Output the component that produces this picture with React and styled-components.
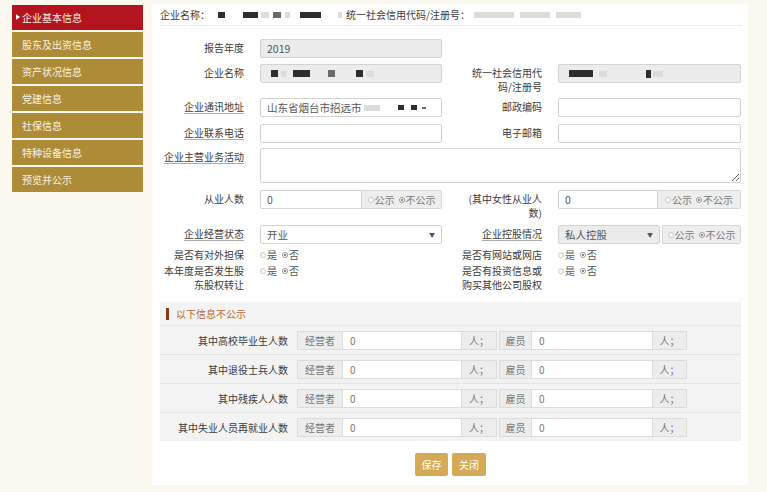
import React from "react";
import styled, { createGlobalStyle } from "styled-components";

const GlobalStyle = createGlobalStyle`
  html, body { margin: 0; padding: 0; background: #fbf8ef; }
  body {
    font-family: "Noto Sans CJK SC", "Noto Sans", sans-serif;
    font-size: 10px;
    color: #3a3a3a;
  }
`;

const Page = styled.div`
  display: flex;
  align-items: flex-start;
  gap: 9px;
  width: 767px;
  height: 492px;
  padding: 4px 0 0 12px;
  box-sizing: border-box;
`;

const Sidebar = styled.ul`
  list-style: none;
  margin: 1px 0 0;
  padding: 0;
  width: 131px;
  display: flex;
  flex-direction: column;
  gap: 2px;
`;

const NavItem = styled.li`
  position: relative;
  height: 25px;
  line-height: 25px;
  padding-left: 10px;
  color: #fbf3e4;
  font-size: 10px;
  background: ${p => (p.$active ? "#b3141d" : "#ae8b37")};
  &::before {
    content: "";
    display: ${p => (p.$active ? "block" : "none")};
    position: absolute;
    left: 4px;
    top: 9px;
    border-left: 4px solid #fff;
    border-top: 3px solid transparent;
    border-bottom: 3px solid transparent;
  }
`;

const Panel = styled.div`
  width: 596px;
  height: 481px;
  background: #fff;
  padding: 0 7px 0 8px;
  box-sizing: border-box;
  display: flex;
  flex-direction: column;
`;

const Header = styled.div`
  display: flex;
  align-items: center;
  height: 12px;
  padding: 5px 0 4px;
  margin-right: -1px;
  border-bottom: 1px solid #ececec;
  line-height: 12px;
`;

const Blot = styled.span`
  display: inline-block;
  flex: none;
  width: ${p => p.$w}px;
  height: ${p => p.$h || 6}px;
  margin-left: ${p => p.$ml || 0}px;
  background: ${p => (p.$tone === "dark" ? "#2e2e2e" : p.$tone === "mid" ? "#6a6a6a" : "#dcdcdc")};
  filter: blur(0.6px);
`;

const Row = styled.div`
  display: grid;
  grid-template-columns: 84px 182px 84px 183px;
  column-gap: 16px;
  align-items: start;
  margin-top: ${p => p.$mt}px;
`;

const Label = styled.div`
  text-align: right;
  line-height: 14px;
  padding-top: 2px;
  white-space: nowrap;
  span {
    text-decoration: ${p => (p.$tip ? "underline" : "none")};
    text-decoration-color: #aaa;
    text-underline-offset: 2px;
  }
`;

const Field = styled.div`
  display: flex;
  align-items: center;
  height: 19px;
  flex: 1;
  min-width: 0;
  padding: 0 6px;
  box-sizing: border-box;
  border: 1px solid #d2d2d2;
  border-radius: ${p => (p.$joined ? "2px 0 0 2px" : "2px")};
  background: ${p => (p.$ro ? "#ececec" : "#fff")};
  color: #555;
  font-size: 10.5px;
  overflow: hidden;
  white-space: nowrap;
`;

const Arrow = styled.span`
  margin-left: auto;
  font-size: 6px;
  color: #555;
`;

const Area = styled.textarea`
  grid-column: 2 / 5;
  height: 35px;
  margin: 0;
  border: 1px solid #d2d2d2;
  border-radius: 2px;
  box-sizing: border-box;
  font-family: inherit;
  resize: vertical;
`;

const Group = styled.div`
  display: flex;
  gap: ${p => p.$gap || 0}px;
`;

const Addon = styled.div`
  display: flex;
  align-items: center;
  justify-content: center;
  width: ${p => p.$w}px;
  flex: none;
  height: 19px;
  box-sizing: border-box;
  border: 1px solid #d8d8d8;
  border-left: ${p => (p.$sep ? "1px solid #d8d8d8" : "none")};
  border-radius: 0 2px 2px 0;
  background: #eee;
  color: #777;
  font-size: 10px;
  gap: 4px;
`;

const Radios = styled.div`
  display: flex;
  align-items: center;
  gap: 5px;
  line-height: 14px;
  padding-top: 2px;
  color: #555;
`;

const RadioOpt = styled.span`
  display: inline-flex;
  align-items: center;
  gap: 1px;
  &::before {
    content: "";
    width: 4px;
    height: 4px;
    border-radius: 50%;
    border: 1px solid ${p => (p.$on ? "#999" : "#c8c8c8")};
    background: ${p => (p.$on ? "radial-gradient(circle, #888 45%, #fff 55%)" : "#fff")};
  }
`;

const Section = styled.div`
  margin-top: 10px;
  background: #f3f3f3;
`;

const SectionHead = styled.div`
  display: flex;
  align-items: center;
  height: 23px;
  padding-left: 6px;
  border-bottom: 1px solid #e6e6e6;
  color: #b8672a;
  &::before {
    content: "";
    width: 3px;
    height: 12px;
    margin-right: 7px;
    background: #8b3b13;
  }
`;

const TRow = styled.div`
  display: flex;
  align-items: center;
  height: 28px;
  border-bottom: 1px solid #e4e4e4;
  &:last-child { border-bottom: none; }
`;

const TLabel = styled.div`
  width: 128px;
  margin-right: 9px;
  text-align: right;
`;

const Cell = styled.div`
  display: flex;
  align-items: center;
  height: 19px;
  width: ${p => p.$w}px;
  box-sizing: border-box;
  padding: 0 ${p => (p.$input ? 7 : 0)}px;
  justify-content: ${p => (p.$input ? "flex-start" : "center")};
  border: 1px solid #dcdcdc;
  border-left: ${p => (p.$first ? "1px solid #dcdcdc" : "none")};
  margin-left: ${p => p.$ml || 0}px;
  background: ${p => (p.$input ? "#fff" : "#ededed")};
  color: #777;
`;

const Actions = styled.div`
  display: flex;
  justify-content: center;
  gap: 4px;
  margin-top: 12px;
`;

const Button = styled.button`
  height: 23px;
  width: ${p => p.$w}px;
  padding: 0;
  border: none;
  border-radius: 2px;
  background: #d5aa57;
  color: #fff;
  font-family: inherit;
  font-size: 10px;
`;

const nav = ["企业基本信息", "股东及出资信息", "资产状况信息", "党建信息", "社保信息", "特种设备信息", "预览并公示"];

const Publish = () => (
  <>
    <RadioOpt>公示</RadioOpt>
    <RadioOpt $on>不公示</RadioOpt>
  </>
);

const YesNo = () => (
  <Radios>
    <RadioOpt>是</RadioOpt>
    <RadioOpt $on>否</RadioOpt>
  </Radios>
);

const staff = ["其中高校毕业生人数", "其中退役士兵人数", "其中残疾人人数", "其中失业人员再就业人数"];

export default function App() {
  return (
    <Page>
      <GlobalStyle />
      <Sidebar>
        {nav.map((n, i) => (
          <NavItem key={n} $active={i === 0}>{n}</NavItem>
        ))}
      </Sidebar>
      <Panel>
        <Header>
          企业名称：
          <Blot $ml={8} $w={7} $tone="dark" />
          <Blot $ml={18} $w={15} $tone="dark" />
          <Blot $ml={3} $w={8} />
          <Blot $ml={4} $w={8} $tone="mid" />
          <Blot $ml={4} $w={5} />
          <Blot $ml={10} $w={21} $tone="dark" />
          <Blot $ml={17} $w={4} />
          <span style={{ marginLeft: 4 }}>统一社会信用代码/注册号：</span>
          <Blot $ml={4} $w={40} />
          <Blot $ml={6} $w={30} />
          <Blot $ml={6} $w={25} />
        </Header>

        <Row $mt={13}>
          <Label>报告年度</Label>
          <Field $ro>2019</Field>
        </Row>

        <Row $mt={6}>
          <Label>企业名称</Label>
          <Field $ro>
            <Blot $ml={4} $w={7} $h={7} $tone="dark" />
            <Blot $ml={3} $w={5} />
            <Blot $ml={7} $w={17} $h={7} $tone="dark" />
            <Blot $ml={18} $w={7} $h={7} $tone="mid" />
            <Blot $ml={21} $w={7} $h={7} $tone="dark" />
            <Blot $ml={3} $w={8} />
          </Field>
          <Label>统一社会信用代<br />码/注册号</Label>
          <Field $ro>
            <Blot $ml={4} $w={24} $h={7} $tone="dark" />
            <Blot $ml={6} $w={8} />
            <Blot $ml={39} $w={5} $h={8} $tone="dark" />
            <Blot $ml={2} $w={10} />
          </Field>
        </Row>

        <Row $mt={4}>
          <Label $tip><span>企业通讯地址</span></Label>
          <Field>
            山东省烟台市招远市
            <Blot $ml={2} $w={16} />
            <Blot $ml={18} $w={6} $h={5} $tone="dark" />
            <Blot $ml={7} $w={6} $h={5} $tone="dark" />
            <Blot $ml={5} $w={4} $h={2} $tone="mid" />
          </Field>
          <Label>邮政编码</Label>
          <Field />
        </Row>

        <Row $mt={7}>
          <Label $tip><span>企业联系电话</span></Label>
          <Field />
          <Label>电子邮箱</Label>
          <Field />
        </Row>

        <Row $mt={5}>
          <Label $tip><span>企业主营业务活动</span></Label>
          <Area />
        </Row>

        <Row $mt={7}>
          <Label>从业人数</Label>
          <Group>
            <Field $joined>0</Field>
            <Addon $w={80}><Publish /></Addon>
          </Group>
          <Label>(其中女性从业人<br />数)</Label>
          <Group>
            <Field $joined>0</Field>
            <Addon $w={83}><Publish /></Addon>
          </Group>
        </Row>

        <Row $mt={5}>
          <Label $tip><span>企业经营状态</span></Label>
          <Field>
            开业<Arrow>▼</Arrow>
          </Field>
          <Label $tip><span>企业控股情况</span></Label>
          <Group $gap={2}>
            <Field $ro>
              私人控股<Arrow>▼</Arrow>
            </Field>
            <Addon $w={79} $sep><Publish /></Addon>
          </Group>
        </Row>

        <Row $mt={2}>
          <Label>是否有对外担保</Label>
          <YesNo />
          <Label>是否有网站或网店</Label>
          <YesNo />
        </Row>

        <Row $mt={0}>
          <Label>本年度是否发生股<br />东股权转让</Label>
          <YesNo />
          <Label>是否有投资信息或<br />购买其他公司股权</Label>
          <YesNo />
        </Row>

        <Section>
          <SectionHead>以下信息不公示</SectionHead>
          {staff.map(s => (
            <TRow key={s}>
              <TLabel>{s}</TLabel>
              <Cell $first $w={46}>经营者</Cell>
              <Cell $input $w={119}>0</Cell>
              <Cell $w={35}>人；</Cell>
              <Cell $first $ml={2} $w={33}>雇员</Cell>
              <Cell $input $w={121}>0</Cell>
              <Cell $w={34}>人；</Cell>
            </TRow>
          ))}
        </Section>

        <Actions>
          <Button $w={33}>保存</Button>
          <Button $w={34}>关闭</Button>
        </Actions>
      </Panel>
    </Page>
  );
}
